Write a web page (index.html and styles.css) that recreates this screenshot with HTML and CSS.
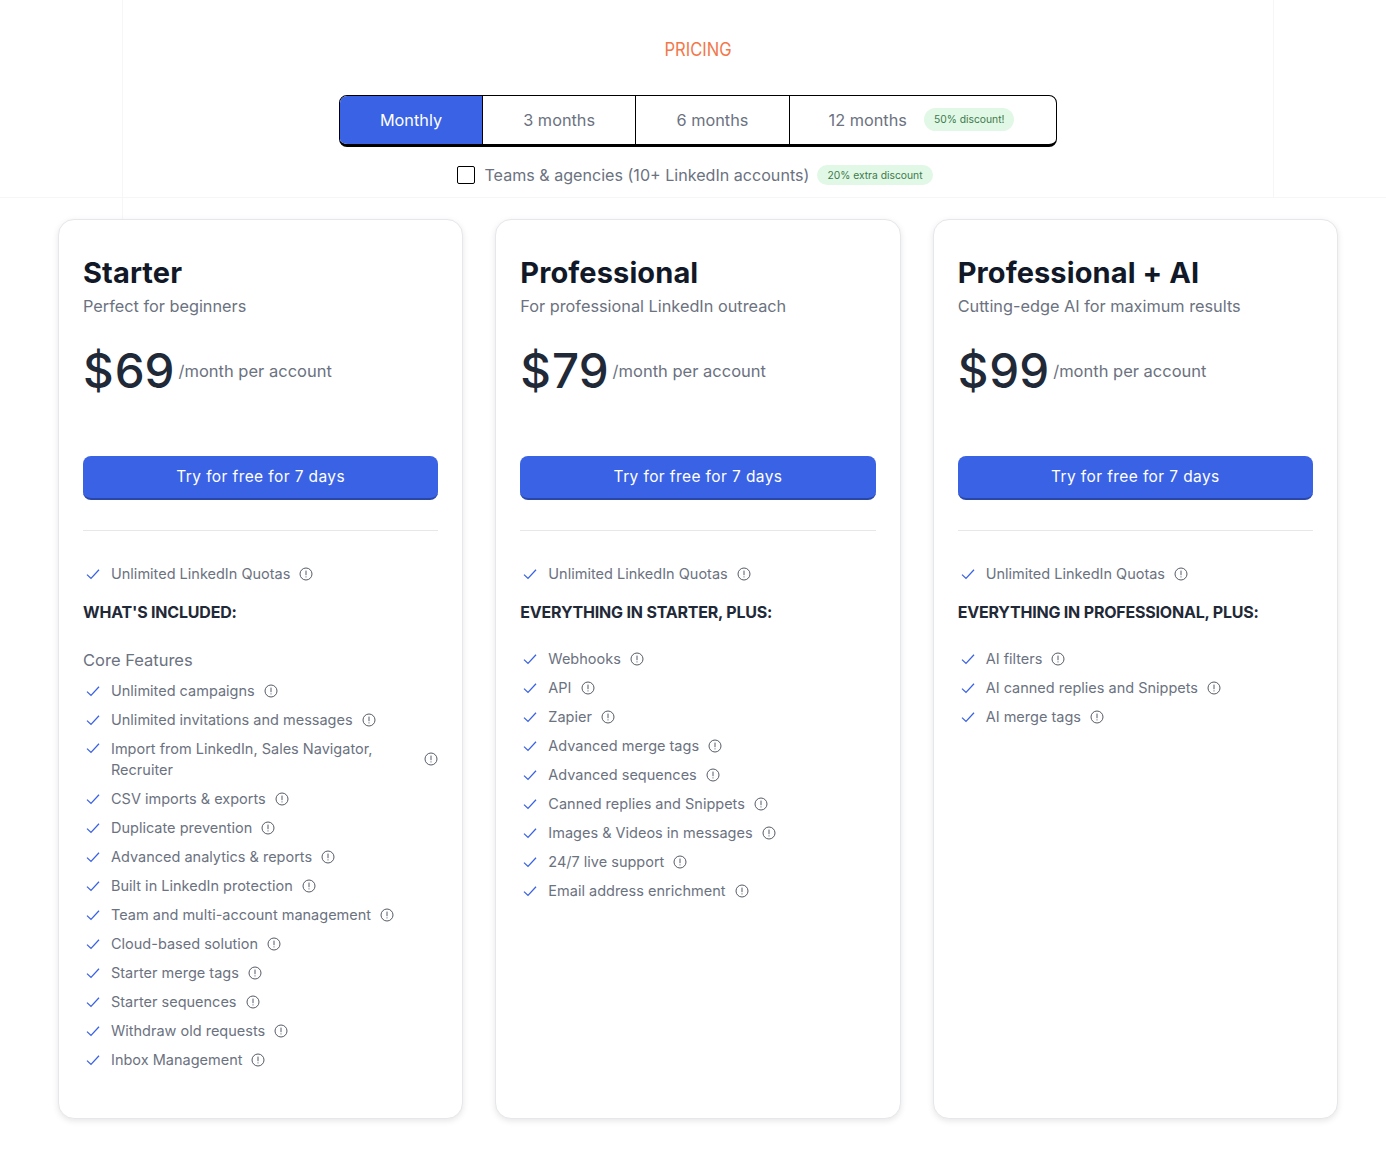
FILE: index.html
```html
<!DOCTYPE html>
<html lang="en">
<head>
    <meta charset="UTF-8">
    <meta name="viewport" content="width=device-width, initial-scale=1.0">
    <title>Pricing</title>
    <link rel="stylesheet" href="styles.css">
</head>
<body>
    <svg class="sprite" width="0" height="0">
        <symbol id="check" viewBox="0 0 16 16"><path d="M2 8.6 6 12.4 14 3.8" fill="none" stroke="#3a62e4" stroke-width="1.3"/></symbol>
        <symbol id="info" viewBox="0 0 14 14"><circle cx="7" cy="7" r="6" fill="none" stroke="#555b66" stroke-width="1"/><path d="M7 3.6V8.2M7 9.4V10.4" fill="none" stroke="#555b66" stroke-width="1"/></symbol>
    </svg>

    <div class="page">
        <div class="kicker">PRICING</div>

        <div class="periods">
            <div class="period active">Monthly</div>
            <div class="period">3 months</div>
            <div class="period">6 months</div>
            <div class="period">12 months <span class="pill">50% discount!</span></div>
        </div>

        <div class="teams">
            <span class="box"></span>
            <span class="teams-label">Teams &amp; agencies (10+ LinkedIn accounts)</span>
            <span class="pill">20% extra discount</span>
        </div>

        <div class="plans">
            <div class="plan">
                <div class="name">Starter</div>
                <div class="tagline">Perfect for beginners</div>
                <div class="price"><span class="amount">$<span class="num">69</span></span><span class="per">/month per account</span></div>
                <div class="cta">Try for free for 7 days</div>
                <div class="rule"></div>
                <ul class="features top">
                    <li><svg class="check"><use href="#check"/></svg><span>Unlimited LinkedIn Quotas</span><svg class="info"><use href="#info"/></svg></li>
                </ul>
                <div class="included">WHAT'S INCLUDED:</div>
                <div class="group">Core Features</div>
                <ul class="features">
                    <li><svg class="check"><use href="#check"/></svg><span>Unlimited campaigns</span><svg class="info"><use href="#info"/></svg></li>
                    <li><svg class="check"><use href="#check"/></svg><span>Unlimited invitations and messages</span><svg class="info"><use href="#info"/></svg></li>
                    <li class="wrap"><svg class="check"><use href="#check"/></svg><span>Import from LinkedIn, Sales Navigator, Recruiter</span><svg class="info"><use href="#info"/></svg></li>
                    <li><svg class="check"><use href="#check"/></svg><span>CSV imports &amp; exports</span><svg class="info"><use href="#info"/></svg></li>
                    <li><svg class="check"><use href="#check"/></svg><span>Duplicate prevention</span><svg class="info"><use href="#info"/></svg></li>
                    <li><svg class="check"><use href="#check"/></svg><span>Advanced analytics &amp; reports</span><svg class="info"><use href="#info"/></svg></li>
                    <li><svg class="check"><use href="#check"/></svg><span>Built in LinkedIn protection</span><svg class="info"><use href="#info"/></svg></li>
                    <li><svg class="check"><use href="#check"/></svg><span>Team and multi-account management</span><svg class="info"><use href="#info"/></svg></li>
                    <li><svg class="check"><use href="#check"/></svg><span>Cloud-based solution</span><svg class="info"><use href="#info"/></svg></li>
                    <li><svg class="check"><use href="#check"/></svg><span>Starter merge tags</span><svg class="info"><use href="#info"/></svg></li>
                    <li><svg class="check"><use href="#check"/></svg><span>Starter sequences</span><svg class="info"><use href="#info"/></svg></li>
                    <li><svg class="check"><use href="#check"/></svg><span>Withdraw old requests</span><svg class="info"><use href="#info"/></svg></li>
                    <li><svg class="check"><use href="#check"/></svg><span>Inbox Management</span><svg class="info"><use href="#info"/></svg></li>
                </ul>
            </div>

            <div class="plan">
                <div class="name">Professional</div>
                <div class="tagline">For professional LinkedIn outreach</div>
                <div class="price"><span class="amount">$<span class="num">79</span></span><span class="per">/month per account</span></div>
                <div class="cta">Try for free for 7 days</div>
                <div class="rule"></div>
                <ul class="features top">
                    <li><svg class="check"><use href="#check"/></svg><span>Unlimited LinkedIn Quotas</span><svg class="info"><use href="#info"/></svg></li>
                </ul>
                <div class="included">EVERYTHING IN STARTER, PLUS:</div>
                <ul class="features no-group">
                    <li><svg class="check"><use href="#check"/></svg><span>Webhooks</span><svg class="info"><use href="#info"/></svg></li>
                    <li><svg class="check"><use href="#check"/></svg><span>API</span><svg class="info"><use href="#info"/></svg></li>
                    <li><svg class="check"><use href="#check"/></svg><span>Zapier</span><svg class="info"><use href="#info"/></svg></li>
                    <li><svg class="check"><use href="#check"/></svg><span>Advanced merge tags</span><svg class="info"><use href="#info"/></svg></li>
                    <li><svg class="check"><use href="#check"/></svg><span>Advanced sequences</span><svg class="info"><use href="#info"/></svg></li>
                    <li><svg class="check"><use href="#check"/></svg><span>Canned replies and Snippets</span><svg class="info"><use href="#info"/></svg></li>
                    <li><svg class="check"><use href="#check"/></svg><span>Images &amp; Videos in messages</span><svg class="info"><use href="#info"/></svg></li>
                    <li><svg class="check"><use href="#check"/></svg><span>24/7 live support</span><svg class="info"><use href="#info"/></svg></li>
                    <li><svg class="check"><use href="#check"/></svg><span>Email address enrichment</span><svg class="info"><use href="#info"/></svg></li>
                </ul>
            </div>

            <div class="plan">
                <div class="name">Professional + AI</div>
                <div class="tagline">Cutting-edge AI for maximum results</div>
                <div class="price"><span class="amount">$<span class="num">99</span></span><span class="per">/month per account</span></div>
                <div class="cta">Try for free for 7 days</div>
                <div class="rule"></div>
                <ul class="features top">
                    <li><svg class="check"><use href="#check"/></svg><span>Unlimited LinkedIn Quotas</span><svg class="info"><use href="#info"/></svg></li>
                </ul>
                <div class="included">EVERYTHING IN PROFESSIONAL, PLUS:</div>
                <ul class="features no-group">
                    <li><svg class="check"><use href="#check"/></svg><span>AI filters</span><svg class="info"><use href="#info"/></svg></li>
                    <li><svg class="check"><use href="#check"/></svg><span>AI canned replies and Snippets</span><svg class="info"><use href="#info"/></svg></li>
                    <li><svg class="check"><use href="#check"/></svg><span>AI merge tags</span><svg class="info"><use href="#info"/></svg></li>
                </ul>
            </div>
        </div>
    </div>
</body>
</html>
```

FILE: styles.css
```css
* {
    box-sizing: border-box;
}

body {
    margin: 0;
    height: 1150px;
    overflow: hidden;
    font-family: "Inter", "Liberation Sans", sans-serif;
    color: #6b7280;
    background-color: white;
    /* faint grid behind the page */
    background-image:
        linear-gradient(#f6f6f7, #f6f6f7),
        linear-gradient(#f6f6f7, #f6f6f7),
        linear-gradient(#f6f6f7, #f6f6f7);
    background-repeat: no-repeat;
    background-size: 1px 219px, 1px 197px, 100% 1px;
    background-position: 122px 0, 1273px 0, 0 197px;
}

.sprite {
    display: block;
    position: absolute;
}

.page {
    width: 1280px;
    margin-left: 58px;
    padding-top: 39px;
}

.kicker {
    text-align: center;
    color: #f2784a;
    font-size: 18px;
    line-height: 22px;
    transform: scaleX(0.92);
}

.periods {
    display: flex;
    width: 718px;
    height: 52px;
    margin: 34px auto 0;
    border: 1px solid black;
    border-bottom-width: 3px;
    border-radius: 8px;
    overflow: hidden;
}

.period {
    display: flex;
    align-items: center;
    justify-content: center;
    gap: 17px;
    width: 153.3px;
    border-right: 1px solid black;
    font-size: 16.3px;
}

.period:first-child {
    width: 143px;
}

.period:last-child {
    flex: 1;
    justify-content: flex-start;
    padding-left: 39px;
    border-right: 0;
}

.period.active {
    color: white;
    background-color: #3a62e4;
}

.pill {
    padding: 0 10px;
    border-radius: 12px;
    color: #3c7a4c;
    background-color: #e2f8e6;
    font-size: 10.3px;
    line-height: 23px;
    white-space: nowrap;
}

.period .pill {
    margin-bottom: 2px;
}

.teams {
    display: flex;
    align-items: center;
    justify-content: center;
    height: 24px;
    margin-top: 16px;
    padding-right: 6px;
    font-size: 16.1px;
}

.box {
    width: 18px;
    height: 18px;
    margin-right: 9px;
    border: 1px solid black;
    border-radius: 2px;
}

.teams .pill {
    margin-left: 8px;
    line-height: 20px;
}

.plans {
    display: grid;
    grid-template-columns: repeat(3, minmax(0, 1fr));
    gap: 32px;
    height: 900px;
    margin-top: 32px;
}

.plan {
    padding: 33px 24px 0;
    background-color: white;
    border: 1px solid #e5e7eb;
    border-radius: 16px;
    box-shadow: 0 2px 6px rgba(0, 0, 0, 0.1);
}

.name {
    color: #111827;
    font-size: 29px;
    font-weight: 700;
    line-height: 40px;
    letter-spacing: 0.1px;
}

.tagline {
    font-size: 16.3px;
    line-height: 26px;
}

.price {
    display: flex;
    align-items: center;
    gap: 4px;
    height: 60px;
    margin-top: 22px;
}

.amount {
    color: #1f2937;
    font-size: 47.5px;
    font-weight: 500;
    line-height: 60px;
}

.num {
    margin-left: 1px;
}

.per {
    font-size: 16.5px;
}

.cta {
    height: 44px;
    margin-top: 55px;
    border-bottom: 2px solid #2a47a8;
    border-radius: 8px;
    color: white;
    background-color: #3a62e4;
    font-size: 15.5px;
    line-height: 42px;
    text-align: center;
    letter-spacing: 0.4px;
}

.rule {
    height: 1px;
    margin-top: 30px;
    background-color: #e5e7eb;
}

.features {
    display: flex;
    flex-direction: column;
    gap: 8px;
    margin: 0;
    padding: 0;
    list-style: none;
}

.features.top {
    margin-top: 32px;
}

.features.no-group {
    margin-top: 26px;
}

.features li {
    display: flex;
    align-items: center;
    font-size: 14.5px;
    line-height: 21px;
}

.features li span {
    margin-right: 9px;
}

.check {
    flex: none;
    width: 16px;
    height: 16px;
    margin: 0 10px 0 2px;
}

.info {
    flex: none;
    width: 14px;
    height: 14px;
}

.features li.wrap span {
    flex: 1;
    margin-right: 40px;
}

.features li.wrap .check {
    align-self: flex-start;
    margin-top: 2px;
}

.included {
    margin-top: 18px;
    color: #1f2937;
    font-size: 16px;
    font-weight: 700;
    line-height: 20px;
    letter-spacing: -0.2px;
}

.group {
    margin-top: 27px;
    margin-bottom: 9px;
    font-size: 16.5px;
    line-height: 22px;
}
```
